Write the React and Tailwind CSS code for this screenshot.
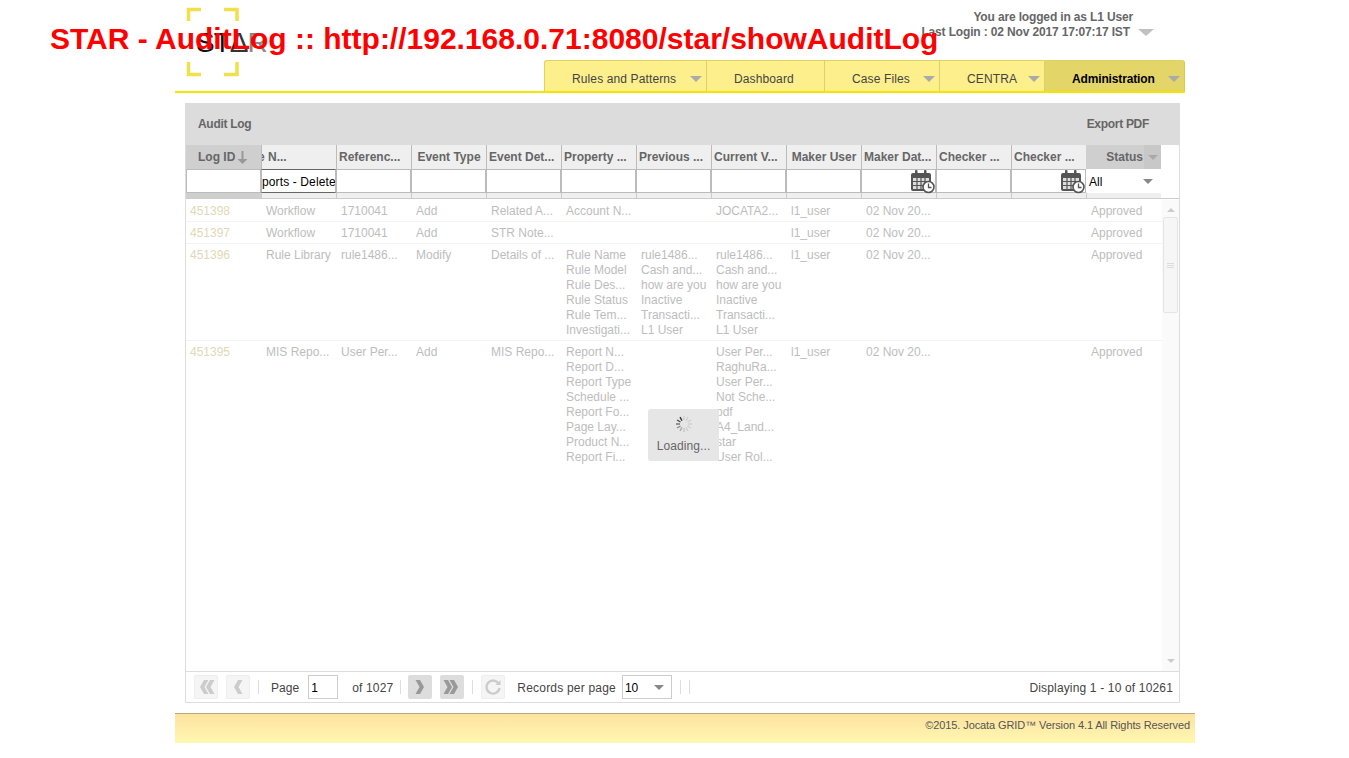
const columns = [
  'Log ID', 'e N...', 'Referenc...', 'Event Type', 'Event Det...', 'Property ...', 'Previous ...',
  'Current V...', 'Maker User', 'Maker Dat...', 'Checker ...', 'Checker ...', 'Status',
]

const rows = [
  {
    id: '451398',
    cells: ['Workflow', '1710041', 'Add', 'Related A...', ['Account N...'], [], ['JOCATA2...'], 'l1_user', '02 Nov 20...', '', '', 'Approved'],
  },
  {
    id: '451397',
    cells: ['Workflow', '1710041', 'Add', 'STR Note...', [], [], [], 'l1_user', '02 Nov 20...', '', '', 'Approved'],
  },
  {
    id: '451396',
    cells: [
      'Rule Library', 'rule1486...', 'Modify', 'Details of ...',
      ['Rule Name', 'Rule Model', 'Rule Des...', 'Rule Status', 'Rule Tem...', 'Investigati...'],
      ['rule1486...', 'Cash and...', 'how are you', 'Inactive', 'Transacti...', 'L1 User'],
      ['rule1486...', 'Cash and...', 'how are you', 'Inactive', 'Transacti...', 'L1 User'],
      'l1_user', '02 Nov 20...', '', '', 'Approved',
    ],
  },
  {
    id: '451395',
    cells: [
      'MIS Repo...', 'User Per...', 'Add', 'MIS Repo...',
      ['Report N...', 'Report D...', 'Report Type', 'Schedule ...', 'Report Fo...', 'Page Lay...', 'Product N...', 'Report Fi...'],
      [],
      ['User Per...', 'RaghuRa...', 'User Per...', 'Not Sche...', 'pdf', 'A4_Land...', 'star', 'User Rol...'],
      'l1_user', '02 Nov 20...', '', '', 'Approved',
    ],
  },
]

const tabs = [
  { label: 'Rules and Patterns', width: 'w-[162px]', arrow: true },
  { label: 'Dashboard', width: 'w-[118px]' },
  { label: 'Case Files', width: 'w-[115px]', arrow: true },
  { label: 'CENTRA', width: 'w-[105px]', arrow: true },
  { label: 'Administration', width: 'w-[141px]', arrow: true, active: true },
]

const gridCols = 'grid grid-cols-[repeat(13,75px)]'

function Caret({ className = 'border-t-[#aaa]' }) {
  return <span className={`block w-0 h-0 border-x-[5px] border-x-transparent border-t-[5px] ${className}`} />
}

function Logo() {
  return (
    <div className="relative w-[90px] h-[70px] ml-[11px] mt-[7px]">
      <svg width="54" height="70" viewBox="0 0 54 70" fill="none" stroke="#f0e04a" strokeWidth="3.5">
        <path d="M15 2.5H2.5V14M38 2.5H51V14M2.5 55V67.5H15M51 55V67.5H38" />
      </svg>
      <span className="absolute left-[10px] top-[18px] text-[28px] leading-[36px] tracking-[-1px] text-[#111] whitespace-nowrap">
        ST<span className="text-[#333]">Δ</span><span className="text-[#888]">R</span>
      </span>
    </div>
  )
}

function CalendarIcon() {
  return (
    <svg className="absolute right-[1px] top-[1px]" width="24" height="24" viewBox="0 0 24 24">
      <rect x="0" y="3" width="20" height="18" rx="2" fill="#555" />
      <rect x="4" y="0" width="2.5" height="6" rx="1" fill="#555" />
      <rect x="13" y="0" width="2.5" height="6" rx="1" fill="#555" />
      <path d="M2 8H18V19H2Z" fill="#ddd" />
      <path d="M2 11.5H18M2 15.5H18M6 8V19M10 8V19M14 8V19" stroke="#555" strokeWidth="1.2" />
      <circle cx="17.5" cy="17" r="5.5" fill="#fff" stroke="#555" strokeWidth="1.6" />
      <path d="M17.5 13.5V17.5H20.5" fill="none" stroke="#555" strokeWidth="1.3" />
    </svg>
  )
}

function Spinner() {
  const spokes = [0, 1, 2, 3, 4, 5, 6, 7, 8, 9, 10, 11]
  return (
    <svg width="18" height="18" viewBox="0 0 18 18">
      {spokes.map(i => (
        <line
          key={i}
          x1="9" y1="1" x2="9" y2="5"
          stroke="#333"
          strokeWidth="1.4"
          opacity={i < 6 ? 0.12 : (i - 5) / 6}
          transform={`rotate(${i * 30} 9 9)`}
        />
      ))}
    </svg>
  )
}

function PagerButton({ enabled, children, className = '' }) {
  return (
    <span className={`flex items-center justify-center w-6 h-6 rounded-[2px] border ${enabled ? 'bg-[#ddd] border-[#ddd]' : 'bg-[#f5f5f5] border-[#eee]'} ${className}`}>
      <svg width="18" height="16" viewBox="0 0 18 16" fill={enabled ? '#999' : '#ccc'}>{children}</svg>
    </span>
  )
}

function PagerSep({ className = '' }) {
  return <span className={`block w-px h-[14px] bg-[#ddd] ${className}`} />
}

function Cell({ value, first }) {
  const lines = Array.isArray(value) ? value : [value]
  return (
    <div className={`overflow-hidden whitespace-nowrap ${first ? 'pl-1 text-[#dfd9b5]' : 'pl-[5px]'}`}>
      {lines.map((line, i) => <div key={i} className="h-[15px] leading-[15px]">{line}</div>)}
    </div>
  )
}

function HeaderCell({ label, index }) {
  if (index === 0) {
    return (
      <div className="h-6 bg-[#cfcfcf] flex items-center pl-3 gap-[2px] font-bold text-[#666]">
        {label}
        <svg width="11" height="13" viewBox="0 0 11 13" fill="#999">
          <path d="M4.5 0H6.5V8H10.5L5.5 13L0.5 8H4.5Z" />
        </svg>
      </div>
    )
  }
  if (index === 12) {
    return (
      <div className="h-6 bg-[#cfcfcf] flex items-center justify-end font-bold text-[#666]">
        {label}
        <span className="ml-px w-[17px] h-6 bg-[#c8c8c8] flex items-center justify-center"><Caret /></span>
      </div>
    )
  }
  const centred = label === 'Event Type' || label === 'Maker User'
  return (
    <div className={`h-6 bg-[#efefef] flex items-center border-l border-l-[#bbb] font-bold text-[#666] whitespace-nowrap overflow-hidden ${centred ? 'justify-center' : 'justify-start pl-[2px]'}`}>
      <span className={index === 1 ? '-ml-[6px]' : ''}>{label}</span>
    </div>
  )
}

function FilterCell({ index }) {
  if (index === 12) {
    return (
      <div className="h-6 bg-white flex items-center justify-between pl-[3px] pt-px pr-2 text-black">
        All
        <Caret className="border-t-[#888]" />
      </div>
    )
  }
  const isDate = index === 9 || index === 11
  const isModule = index === 1
  return (
    <div className="relative h-6 bg-white">
      <input
        readOnly
        value={isModule ? 'ports - Delete' : ''}
        className={`block h-6 w-full border pt-px text-[12px] text-black outline-none ${isModule ? 'border-x-[#bbb] border-y-[#666] pl-0 tracking-[0.12px]' : 'border-[#bbb]'} ${isDate ? 'pr-6' : ''}`}
      />
      {isDate && <CalendarIcon />}
    </div>
  )
}

function Panel() {
  return (
    <section className="mt-[10px] ml-[10px] w-[995px] h-[600px] flex flex-col border-x border-b border-[#ddd] text-[12px]">
      <div className="-mx-px h-[42px] bg-[#dcdcdc] flex items-center justify-between pl-[13px] pr-[31px] font-bold text-[#666] tracking-[-0.3px]">
        <span>Audit Log</span>
        <span>Export PDF</span>
      </div>

      <div className={gridCols}>
        {columns.map((label, i) => <HeaderCell key={i} label={label} index={i} />)}
        {columns.map((label, i) => <FilterCell key={i} index={i} />)}
        {columns.map((label, i) => (
          <div key={i} className={`h-[5px] ${i === 0 ? 'bg-[#cfcfcf]' : 'bg-[#efefef] border-l border-l-[#ccc]'}`} />
        ))}
      </div>
      <div className="h-px bg-[#ccc]" />

      <div className="relative flex-1 min-h-0 flex pt-px overflow-hidden">
        <div className="flex-1 text-[#bdbdbd]">
          {rows.map((row, r) => (
            <div key={row.id} className={`${gridCols} pt-1 pb-[2px] ${r < rows.length - 1 ? 'border-b border-b-[#f3f3f3]' : ''}`}>
              <Cell value={row.id} first />
              {row.cells.map((value, i) => <Cell key={i} value={value} />)}
            </div>
          ))}
        </div>

        <div className="w-[17px] flex flex-col items-center bg-[#fafafa]">
          <span className="mt-2 block w-0 h-0 border-x-[4px] border-x-transparent border-b-[4px] border-b-[#ccc]" />
          <div className="mt-[5px] w-[15px] h-[96px] bg-[#f6f6f6] border border-[#e4e4e4] rounded-[2px] flex flex-col items-center justify-center gap-px">
            <span className="block w-[7px] h-px bg-[#ddd]" />
            <span className="block w-[7px] h-px bg-[#ddd]" />
            <span className="block w-[7px] h-px bg-[#ddd]" />
          </div>
          <span className="mt-auto mb-2 block w-0 h-0 border-x-[4px] border-x-transparent border-t-[4px] border-t-[#ccc]" />
        </div>

        <div className="absolute left-[462px] top-[210px] w-[71px] h-[52px] rounded-[3px] bg-[#e6e6e6] flex flex-col items-center pt-[6px] text-[#666]">
          <Spinner />
          <span className="mt-[4px] tracking-[0.1px]">Loading...</span>
        </div>
      </div>

      <div className="h-[31px] border-t border-t-[#ddd] flex items-center pl-2 pr-[6px] text-[#444]">
        <PagerButton>
          <path d="M7 1H11.5L7.5 8L11.5 15H7L3 8ZM13 1H17.5L13.5 8L17.5 15H13L9 8Z" />
        </PagerButton>
        <PagerButton className="ml-2">
          <path d="M9 1H13.5L9.5 8L13.5 15H9L5 8Z" />
        </PagerButton>
        <PagerSep className="ml-2" />
        <span className="ml-3 mt-[2px] tracking-[0.05px]">Page</span>
        <input readOnly value="1" className="ml-[9px] w-[30px] h-6 border border-[#ccc] pl-[2px] pt-px text-[12px] text-black outline-none" />
        <span className="ml-[14px] mt-[2px] tracking-[0.15px]">of 1027</span>
        <PagerSep className="ml-[7px]" />
        <PagerButton enabled className="ml-[7px]">
          <path d="M4.5 1H9L13 8L9 15H4.5L8.5 8Z" />
        </PagerButton>
        <PagerButton enabled className="ml-2">
          <path d="M0.5 1H5L9 8L5 15H0.5L4.5 8ZM6.5 1H11L15 8L11 15H6.5L10.5 8Z" />
        </PagerButton>
        <PagerSep className="ml-2" />
        <span className="ml-2 flex items-center justify-center w-6 h-6 rounded-[2px] border border-[#eee] bg-[#f5f5f5]">
          <svg width="18" height="18" viewBox="0 0 18 18" fill="none" stroke="#ccc" strokeWidth="2.4">
            <path d="M14.5 5.5A6.5 6.5 0 1 0 15.5 10" />
            <path d="M16.5 2V7H11.5" fill="#ccc" stroke="none" />
          </svg>
        </span>
        <span className="ml-3 mt-[2px] tracking-[0.2px]">Records per page</span>
        <span className="ml-[6px] w-[50px] h-6 border border-[#ccc] flex items-center justify-between pl-[2px] pt-px pr-[7px] text-black">
          10
          <Caret className="border-t-[#888]" />
        </span>
        <PagerSep className="ml-2" />
        <PagerSep className="ml-2" />
        <span className="ml-auto mt-[2px] tracking-[0.16px]">Displaying 1 - 10 of 10261</span>
      </div>
    </section>
  )
}

export default function App() {
  return (
    <div className="relative h-[758px] bg-white overflow-hidden font-['Liberation_Sans',Arial,sans-serif]">
      <h1 className="absolute left-[50px] top-[20px] z-10 text-[30px] leading-[38px] font-bold text-[#f00] whitespace-nowrap">
        STAR - AuditLog :: http://192.168.0.71:8080/star/showAuditLog
      </h1>

      <div className="ml-[175px] w-[1010px]">
        <header className="h-[60px] flex justify-between">
          <Logo />
          <div className="relative pt-[10px] pr-[52px] text-[12px] leading-[15px] font-bold text-[#666] tracking-[-0.15px]">
            <div className="pl-[52px] whitespace-nowrap">You are logged in as L1 User</div>
            <div className="whitespace-nowrap">Last Login : 02 Nov 2017 17:07:17 IST</div>
            <span className="absolute right-[31px] top-[29px] block w-0 h-0 border-x-[8px] border-x-transparent border-t-[7px] border-t-[#c0c0c0]" />
          </div>
        </header>

        <nav className="flex justify-end h-[33px] border-b-2 border-b-[#f2e600] text-[12px]">
          {tabs.map((tab, i) => (
            <div
              key={tab.label}
              className={`relative ${tab.width} h-[31px] flex items-center pt-[6px] border-t border-t-[#e0d260] ${i === 0 ? 'rounded-tl-[3px] border-l border-l-[#e0d260]' : 'border-l border-l-[#ddd070]'} ${i === tabs.length - 1 ? 'rounded-tr-[3px] border-r border-r-[#d8ca50]' : ''} ${tab.active ? 'bg-[#e4d568] font-bold text-black tracking-[-0.15px]' : 'bg-[#fcef8c] text-[#444] tracking-[0.12px]'}`}
            >
              <span className="pl-[27px]">{tab.label}</span>
              {tab.arrow && (
                <span className="absolute right-[4px] top-[15px] block w-0 h-0 border-x-[6px] border-x-transparent border-t-[6px] border-t-[#aaa]" />
              )}
            </div>
          ))}
        </nav>

        <Panel />
      </div>

      <footer className="mt-[10px] ml-[175px] w-[1020px] h-[30px] border-t border-t-[#b5ac78] bg-gradient-to-b from-[#fde2a0] to-[#fff8b0] flex items-start justify-end pr-[5px] pt-[3px] text-[11px] text-[#555] tracking-[-0.1px]">
        ©2015. Jocata GRID™ Version 4.1 All Rights Reserved
      </footer>
    </div>
  )
}
